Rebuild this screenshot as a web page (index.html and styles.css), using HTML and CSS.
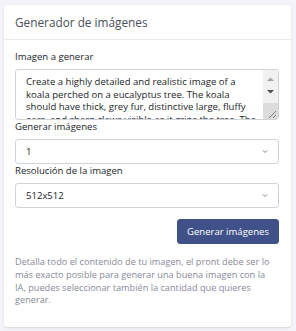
FILE: index.html
```html
<!DOCTYPE html>
<html lang="es">
<head>
<meta charset="utf-8">
<title>Generador de imágenes</title>
<link rel="stylesheet" href="styles.css">
</head>
<body>
<div class="card">
  <div class="card-header">
    <h4 class="card-title">Generador de imágenes</h4>
  </div>
  <div class="card-body">
    <label class="form-label" for="prompt">Imagen a generar</label>
    <div class="textarea-wrap">
      <textarea id="prompt" class="form-control">Create a highly detailed and realistic image of a koala perched on a eucalyptus tree. The koala should have thick, grey fur, distinctive large, fluffy ears, and sharp claws visible as it grips the tree. The background should show lush green leaves.</textarea>
      <div class="fake-scrollbar" aria-hidden="true">
        <span class="sb-btn sb-up"><svg width="15" height="16" viewBox="0 0 15 16"><path fill="#a3a3a3" d="M4 11h7L7.5 7.5z"/><path stroke="#c8c8c8" stroke-width="1" d="M2 16.5h11"/></svg></span>
        <span class="sb-btn sb-down"><svg width="15" height="16" viewBox="0 0 15 16"><path fill="#505050" d="M4 4h7L7.5 7.5z"/></svg></span>
        <span class="sb-track"></span>
        <span class="sb-resizer"><svg width="15" height="16" viewBox="0 0 15 16"><path stroke="#7a7a7a" stroke-width="1" d="M13 8L6 15M13 12L10 15"/></svg></span>
      </div>
    </div>
    <label class="form-label tight" for="count">Generar imágenes</label>
    <select id="count" class="form-select">
      <option>1</option>
      <option>2</option>
      <option>3</option>
    </select>
    <label class="form-label tight" for="res">Resolución de la imagen</label>
    <select id="res" class="form-select">
      <option>512x512</option>
      <option>256x256</option>
      <option>1024x1024</option>
    </select>
    <div class="actions">
      <button class="btn-primary" type="button">Generar imágenes</button>
    </div>
    <p class="text-muted"><span class="line">Detalla todo el contenido de tu imagen, el pront debe ser lo</span> <span class="line">más exacto posible para generar una buena imagen con la</span> <span class="line">IA, puedes seleccionar también la cantidad que quieres</span> <span class="line">generar.</span></p>
  </div>
</div>
</body>
</html>
```
FILE: styles.css
```css
html, body {
  margin: 0;
  padding: 0;
  background: #f3f3f9;
}
body {
  font-family: "Open Sans", "Noto Sans", sans-serif;
  font-size: 9.55px;
  color: #212529;
  padding: 5px 5px 4px 4px;
}
.card {
  background: #fff;
  border-radius: 3px;
  box-shadow: 0 1px 2px rgba(56, 65, 74, 0.15);
}
.card-header {
  height: 34px;
  padding: 0 11px;
  display: flex;
  align-items: center;
  border-bottom: 1px solid #e9ebec;
}
.card-title {
  margin: 0;
  font-size: 11.8px;
  font-weight: 400;
  color: #495057;
}
.card-body {
  padding: 11px 12px 20px 11px;
  display: flex;
  flex-direction: column;
}
.form-label {
  display: block;
  line-height: 12px;
  margin-bottom: 6px;
  color: #212529;
}
.form-label.tight {
  margin-top: 1px;
}
.textarea-wrap {
  position: relative;
}
.form-control {
  display: block;
  box-sizing: border-box;
  width: 100%;
  height: 51px;
  margin: 0;
  padding: 6px 17px 4px 10px;
  font-family: inherit;
  font-size: 9.55px;
  line-height: 12.6px;
  color: #212529;
  border: 1px solid #ced4da;
  border-radius: 3px;
  overflow: hidden;
  resize: none;
}
.fake-scrollbar {
  position: absolute;
  top: 1px;
  right: 1px;
  bottom: 1px;
  width: 15px;
  display: flex;
  flex-direction: column;
  background: #f1f1f1;
  border-radius: 0 2px 2px 0;
  overflow: hidden;
}
.sb-btn,
.sb-resizer {
  display: block;
  height: 16px;
  flex: none;
}
.sb-btn svg,
.sb-resizer svg {
  display: block;
}
.sb-track {
  flex: 1;
}
.sb-resizer {
  background: #dcdcdc;
}
.form-select {
  display: block;
  box-sizing: border-box;
  width: 100%;
  height: 25px;
  margin: 0;
  padding: 0 24px 0 10px;
  font-family: inherit;
  font-size: 9.55px;
  color: #212529;
  background-color: #fff;
  background-image: url("data:image/svg+xml,%3csvg xmlns='http://www.w3.org/2000/svg' viewBox='0 0 16 16'%3e%3cpath fill='none' stroke='%23343a40' stroke-linecap='round' stroke-linejoin='round' stroke-width='2' d='M2 5l6 6 6-6'/%3e%3c/svg%3e");
  background-repeat: no-repeat;
  background-position: right 10px center;
  background-size: 6px 5px;
  border: 1px solid #ced4da;
  border-radius: 3px;
  -webkit-appearance: none;
  appearance: none;
}
.actions {
  display: flex;
  justify-content: flex-end;
  margin-top: 11px;
}
.btn-primary {
  height: 25px;
  padding: 0 9px;
  background: #405189;
  color: #fff;
  border: 1px solid #405189;
  border-radius: 3px;
  font-family: inherit;
  font-size: 9.55px;
}
.text-muted {
  margin: 12px -6px 0 0;
  color: #878a99;
  font-size: 9.2px;
  line-height: 12.8px;
}
.text-muted .line {
  display: block;
  white-space: nowrap;
}
```
